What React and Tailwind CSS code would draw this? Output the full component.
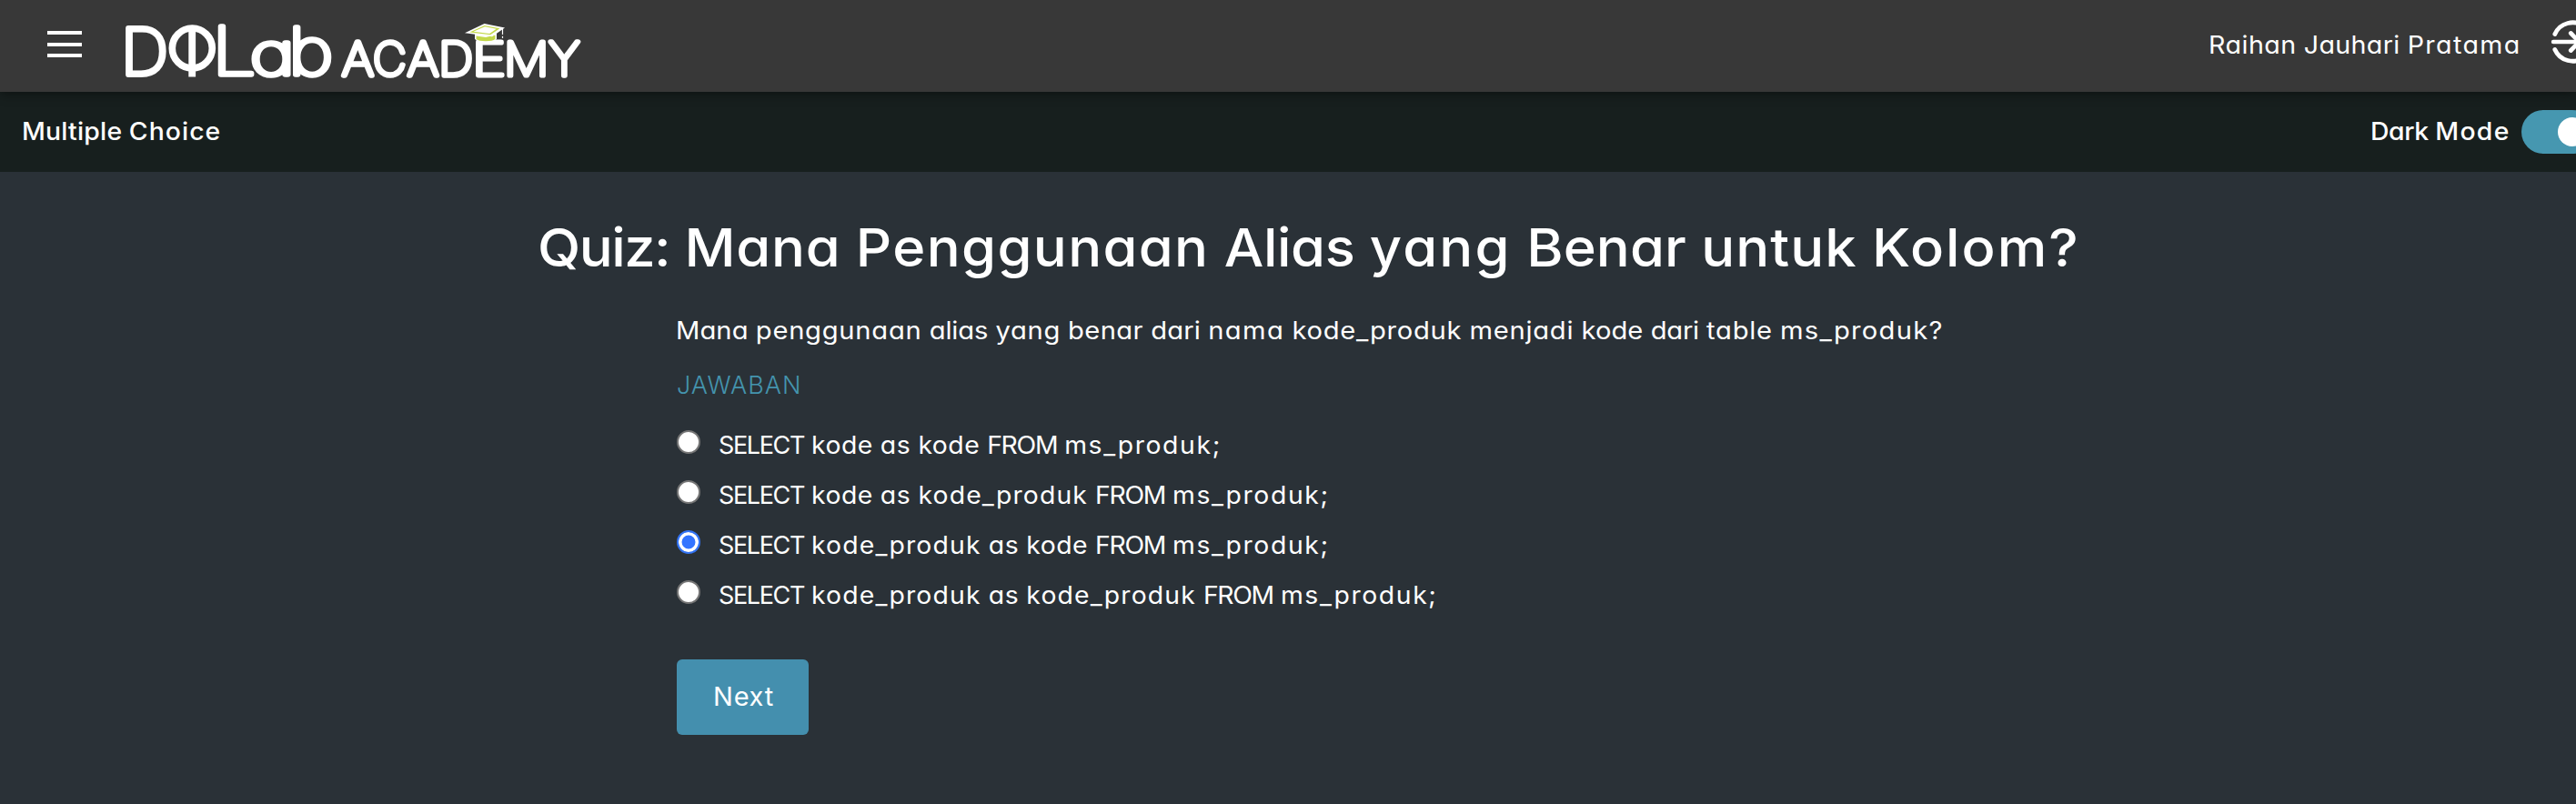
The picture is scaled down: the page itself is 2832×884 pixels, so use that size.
function Phrase({ words }) {
  return words.map(([text, tracking], i) => (
    <span key={i}>
      {i > 0 && " "}
      <span className={tracking}>{text}</span>
    </span>
  ));
}

const kode = ["kode", "tracking-[0.47px]"];
const kodeProduk = ["kode_produk", "tracking-[1.1px]"];
const as = ["as", "tracking-[0.65px]"];
const fromTable = [
  ["FROM", "tracking-[-1.26px]"],
  ["ms_produk;", "tracking-[1.54px]"],
];

const options = [
  { words: [kode, as, kode, ...fromTable], checked: false },
  { words: [kode, as, kodeProduk, ...fromTable], checked: false },
  { words: [kodeProduk, as, kode, ...fromTable], checked: true },
  { words: [kodeProduk, as, kodeProduk, ...fromTable], checked: false },
];

const title = [
  ["Quiz:", "tracking-[-1.44px]"],
  ["Mana", "tracking-[0.67px]"],
  ["Penggunaan", "tracking-[1.25px]"],
  ["Alias", "tracking-[-0.4px]"],
  ["yang", "tracking-[2.05px]"],
  ["Benar", "tracking-[0.1px]"],
  ["untuk", "tracking-[0.95px]"],
  ["Kolom?", "tracking-[1.9px]"],
];

const question = [
  ["Mana", "tracking-[0.08px]"],
  ["penggunaan", "tracking-[0.68px]"],
  ["alias", "tracking-[-0.1px]"],
  ["yang", "tracking-[0.6px]"],
  ["benar", "tracking-[0.35px]"],
  ["dari", "tracking-[0.15px]"],
  ["nama", "tracking-[1.27px]"],
  ["kode_produk", "tracking-[0.67px]"],
  ["menjadi", "tracking-[0.69px]"],
  ["kode", "tracking-[0.06px]"],
  ["dari", "tracking-[-0.22px]"],
  ["table", "tracking-[0.68px]"],
  ["ms_produk?", "tracking-[1.16px]"],
];

const logoLetters = [
  { c: "D", x: 133.1, y: 81.75, size: 70, sx: 1.037, w: 5.9 },
  { c: "L", x: 233.3, y: 82.25, size: 73, sx: 1.175, w: 5.4 },
  { c: "a", x: 274.65, y: 81.9, size: 63.5, sx: 1.337, w: 5.4 },
  { c: "b", x: 317.1, y: 81.7, size: 71.5, sx: 1.19, w: 5.4 },
  { c: "A", x: 375.9, y: 83, size: 50.7, sx: 1.071, w: 5.4 },
  { c: "C", x: 409.95, y: 83, size: 50.7, sx: 1, w: 5.4 },
  { c: "A", x: 447.9, y: 83, size: 50.7, sx: 1.054, w: 5.4 },
  { c: "D", x: 482.2, y: 83, size: 50.7, sx: 1.04, w: 5.4 },
  { c: "E", x: 519, y: 83, size: 50.7, sx: 1.25, w: 4.9 },
  { c: "M", x: 553.9, y: 83, size: 50.7, sx: 1.087, w: 5.2 },
  { c: "Y", x: 603.4, y: 83, size: 50.7, sx: 1.037, w: 5.4 },
];

function Logo() {
  return (
    <svg width="510" height="72" viewBox="134 20 510 72" className="shrink-0 overflow-visible">
      <g fill="#fff" stroke="#fff" strokeLinejoin="round" strokeLinecap="round" fontWeight="100">
        {logoLetters.map((l, i) => (
          <text key={i} transform={`translate(${l.x} ${l.y}) scale(${l.sx} 1)`} fontSize={l.size} strokeWidth={l.w}>
            {l.c}
          </text>
        ))}
      </g>
      <circle cx="211.3" cy="53" r="22" fill="none" stroke="#fff" strokeWidth="7.6" />
      <rect x="207.3" y="30" width="7.8" height="54.5" fill="#fff" />
      <path d="M522 37h24v6q-3 3-12 3t-12-3z" fill="#fff" />
      <path d="M523.500 39.500L534 41L544.500 38.500v4.500q-3 2.200-10.500 2.200t-10.500-2.200z" fill="#c3d84a" />
      <path d="M511 36.300L532.500 26L555 30.500L541 40.300z" fill="#fff" />
      <path d="M516.300 35.400L532.700 27.900L549.500 31.200L539.200 38.200z" fill="#c3d84a" />
      <path d="M520.500 34.700L533 29.200L545.700 31.800L538.200 36.900z" fill="#fff" />
      <path d="M552.500 32v6M552.500 39.800v2.200" stroke="#fff" strokeWidth="1.200" />
    </svg>
  );
}

export default function App() {
  return (
    <div className="flex h-[884px] w-full flex-col overflow-hidden whitespace-nowrap bg-[#2a3137] font-['Inter',sans-serif] text-[27px] text-white [font-feature-settings:'cv11']">
      <header className="z-10 flex h-[101px] shrink-0 items-center bg-[#383838] pl-[52px] shadow-[0_2px_12px_rgba(0,0,0,0.45)]">
        <button className="mb-[4px] mr-[44px] flex shrink-0 flex-col gap-[8.5px]">
          <span className="h-[4px] w-[38px] bg-white" />
          <span className="h-[4px] w-[38px] bg-white" />
          <span className="h-[4px] w-[38px] bg-white" />
        </button>
        <div className="pt-[11px]">
          <Logo />
        </div>
        <div className="-mr-[24px] ml-auto flex shrink-0 items-center gap-[27px]">
          <div className="w-[345.5px]">
            <span className="inline-block origin-left scale-x-[1.06]">
              <Phrase
                words={[
                  ["Raihan", "tracking-[0.45px]"],
                  ["Jauhari", "tracking-[0.34px]"],
                  ["Pratama", "tracking-[1.3px]"],
                ]}
              />
            </span>
          </div>
          <svg width="56" height="56" viewBox="0 0 56 56" fill="none" stroke="#fff" strokeWidth="4.8" strokeLinecap="round" strokeLinejoin="round" className="mb-[9px] shrink-0">
            <path d="M8.800 19.500A21.200 21.200 0 1 1 8.800 36.500" />
            <path d="M7 28h28" strokeWidth="4.400" />
            <path d="M26.300 18.500L35.500 28L26.300 37.500" />
          </svg>
        </div>
      </header>

      <div className="flex h-[88px] shrink-0 items-center bg-[#171f1e] pl-[23.5px] font-medium">
        <span className="inline-block origin-left scale-x-[1.05]">
          <Phrase
            words={[
              ["Multiple", "tracking-[0.2px]"],
              ["Choice", "tracking-[1px]"],
            ]}
          />
        </span>
        <div className="-mr-[20px] ml-auto flex items-center gap-[11px]">
          <div className="w-[155.5px]">
            <span className="inline-block origin-left scale-x-[1.05]">
              <Phrase
                words={[
                  ["Dark", "tracking-[-0.35px]"],
                  ["Mode", "tracking-[1.2px]"],
                ]}
              />
            </span>
          </div>
          <div className="flex h-[48px] w-[80px] items-center justify-end rounded-full bg-[#4697b0] pr-[8px]">
            <span className="size-[32px] rounded-full bg-white" />
          </div>
        </div>
      </div>

      <main className="pt-[43px]">
        <h1 className="pl-[591px] text-[58px] font-medium leading-[80px]">
          <span className="inline-block origin-left scale-x-[1.06]">
            <Phrase words={title} />
          </span>
        </h1>
        <div className="pl-[744px] pt-[32px]">
          <p className="-ml-px leading-[40px]">
            <span className="inline-block origin-left scale-x-[1.08]">
              <Phrase words={question} />
            </span>
          </p>
          <p className="mt-[20px] font-light leading-[40px] tracking-[1px] text-[#4494ae]">JAWABAN</p>
          <div className="mt-[18px]">
            {options.map((option, i) => (
              <label key={i} className="flex h-[55px] items-start leading-[55px]">
                <input
                  type="radio"
                  name="jawaban"
                  defaultChecked={option.checked}
                  className="mr-[20px] mt-[11px] size-[26px] shrink-0 appearance-none rounded-full border-2 border-[#767676] bg-white checked:border-[#3374f4] checked:bg-[#3374ff] checked:shadow-[inset_0_0_0_3.5px_white]"
                />
                <span className="w-[101.5px] tracking-[-1.37px]">SELECT</span>
                <span className="inline-block origin-left scale-x-[1.05]">
                  <Phrase words={option.words} />
                </span>
              </label>
            ))}
          </div>
          <button className="mt-[43px] flex h-[83px] w-[145px] items-center justify-center rounded-[6px] bg-[#448fae] pb-[2px] pl-[2px] text-[29px] tracking-[0.7px]">
            Next
          </button>
        </div>
      </main>
    </div>
  );
}
